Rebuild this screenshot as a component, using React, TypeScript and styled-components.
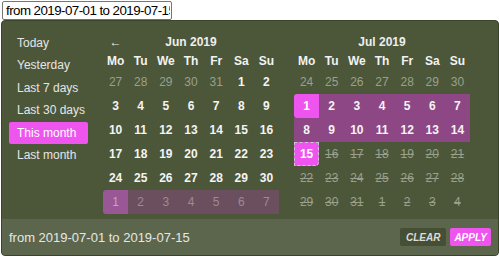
import React from "react";
import styled, { createGlobalStyle, css } from "styled-components";

const Global = createGlobalStyle`
  body {
    margin: 0;
    background: #ffffff;
  }
`;

const Page = styled.div`
  padding: 1px 0 0 1px;
  font-family: "Liberation Sans", Arial, sans-serif;
`;

const DateInput = styled.input`
  display: block;
  box-sizing: border-box;
  width: 170px;
  height: 19px;
  margin: 0 0 0 1px;
  padding: 0 1px 0 3px;
  border: 1px solid #767676;
  border-radius: 2px;
  font-family: "Liberation Sans", Arial, sans-serif;
  font-size: 13.33px;
  letter-spacing: -0.55px;
  color: #000;
  outline: none;
`;

const Panel = styled.div`
  box-sizing: border-box;
  width: 498px;
  height: 236px;
  display: flex;
  flex-direction: column;
  background: #4c573a;
  border: 1px solid #3a4429;
  border-radius: 4px;
  color: #eeeeee;
  overflow: hidden;
`;

const Body = styled.div`
  display: flex;
  padding: 11px 0 5px 7px;
  gap: 15px;
`;

const Ranges = styled.ul`
  list-style: none;
  margin: 0;
  padding: 0;
  width: 79px;
  display: flex;
  flex-direction: column;
  gap: 0.4px;
`;

const RangeItem = styled.li<{ $active?: boolean }>`
  height: 22px;
  line-height: 22px;
  padding-left: 8px;
  border-radius: 2px;
  font-size: 12px;
  color: #e6e6e6;
  white-space: nowrap;
  ${(p) =>
    p.$active &&
    css`
      background: #ee55ee;
      color: #ffffff;
    `}
`;

const Month = styled.div`
  width: 176px;
  display: grid;
  grid-template-columns: repeat(7, 1fr);
  grid-template-rows: 20px 18px repeat(6, 24px);
`;

const Title = styled.div`
  grid-column: 2 / 7;
  text-align: center;
  font-size: 12px;
  font-weight: bold;
  line-height: 20px;
  color: #eeeeee;
`;

const Arrow = styled.div`
  text-align: center;
  font-size: 12px;
  font-weight: bold;
  line-height: 20px;
  color: #eeeeee;
`;

const WeekDay = styled.div`
  text-align: center;
  font-size: 12px;
  font-weight: bold;
  line-height: 18px;
  color: #f2f2f2;
`;

type Tone = "normal" | "muted" | "disabled";
type Mark = "none" | "in" | "start" | "end" | "ghost" | "ghostStart";

const Day = styled.div<{ $tone: Tone; $mark: Mark }>`
  box-sizing: border-box;
  text-align: center;
  font-size: 12px;
  line-height: 24px;
  font-weight: bold;
  color: #f4f4f4;
  ${(p) =>
    p.$tone === "muted" &&
    css`
      font-weight: normal;
      color: #9aa08c;
    `}
  ${(p) =>
    p.$tone === "disabled" &&
    css`
      font-weight: normal;
      color: #9aa08c;
      text-decoration: line-through;
    `}
  ${(p) =>
    p.$mark === "in" &&
    css`
      background: #8e4785;
    `}
  ${(p) =>
    p.$mark === "start" &&
    css`
      background: #ee55ee;
      color: #ffffff;
      border-radius: 3px 0 0 3px;
    `}
  ${(p) =>
    p.$mark === "end" &&
    css`
      background: #ee55ee;
      color: #ffffff;
      border: 1px dashed #c9c9c9;
      line-height: 22px;
      border-radius: 0 0 4px 0;
    `}
  ${(p) =>
    p.$mark === "ghost" &&
    css`
      background: #6b4f5f;
      color: #9c8a94;
      font-weight: normal;
    `}
  ${(p) =>
    p.$mark === "ghostStart" &&
    css`
      background: #9a5796;
      color: #c3a5c0;
      font-weight: normal;
      border-radius: 3px 0 0 3px;
    `}
`;

const Footer = styled.div`
  flex: 1;
  display: flex;
  align-items: center;
  padding: 0 7px 0 7px;
  background: #5c664c;
`;

const FooterText = styled.span`
  flex: 1;
  font-size: 13px;
  color: #e6e6e6;
`;

const Button = styled.button<{ $primary?: boolean }>`
  height: 18px;
  margin-left: 4px;
  padding: 0 ${(p) => (p.$primary ? "4px" : "6px")};
  border: none;
  border-radius: 2px;
  font-family: "Liberation Sans", Arial, sans-serif;
  font-size: 10px;
  font-weight: bold;
  font-style: italic;
  background: ${(p) => (p.$primary ? "#ee55ee" : "#454f35")};
  color: ${(p) => (p.$primary ? "#ffffff" : "#dcdcdc")};
`;

type Cell = { n: number; tone: Tone; mark: Mark };

const weekDays = ["Mo", "Tu", "We", "Th", "Fr", "Sa", "Su"];

const june: Cell[] = [
  ...[27, 28, 29, 30, 31].map((n) => ({ n, tone: "muted" as Tone, mark: "none" as Mark })),
  ...Array.from({ length: 30 }, (_, i) => ({ n: i + 1, tone: "normal" as Tone, mark: "none" as Mark })),
  ...[1, 2, 3, 4, 5, 6, 7].map((n) => ({
    n,
    tone: "muted" as Tone,
    mark: (n === 1 ? "ghostStart" : "ghost") as Mark,
  })),
];

const july: Cell[] = [
  ...[24, 25, 26, 27, 28, 29, 30].map((n) => ({ n, tone: "muted" as Tone, mark: "none" as Mark })),
  ...Array.from({ length: 31 }, (_, i) => {
    const n = i + 1;
    let mark: Mark = "none";
    if (n === 1) mark = "start";
    else if (n === 15) mark = "end";
    else if (n < 15) mark = "in";
    return { n, tone: (n > 15 ? "disabled" : "normal") as Tone, mark };
  }),
  ...[1, 2, 3, 4].map((n) => ({ n, tone: "disabled" as Tone, mark: "none" as Mark })),
];

const ranges = ["Today", "Yesterday", "Last 7 days", "Last 30 days", "This month", "Last month"];

const Calendar = ({ title, days, arrow }: { title: string; days: Cell[]; arrow?: boolean }) => (
  <Month>
    {arrow ? <Arrow>←</Arrow> : <div />}
    <Title>{title}</Title>
    <div />
    {weekDays.map((d) => (
      <WeekDay key={d}>{d}</WeekDay>
    ))}
    {days.map((d, i) => (
      <Day key={i} $tone={d.tone} $mark={d.mark}>
        {d.n}
      </Day>
    ))}
  </Month>
);

const App = () => {
  return (
    <Page>
      <Global />
      <DateInput defaultValue="from 2019-07-01 to 2019-07-15" />
      <Panel>
        <Body>
          <Ranges>
            {ranges.map((r) => (
              <RangeItem key={r} $active={r === "This month"}>
                {r}
              </RangeItem>
            ))}
          </Ranges>
          <Calendar title="Jun 2019" days={june} arrow />
          <Calendar title="Jul 2019" days={july} />
        </Body>
        <Footer>
          <FooterText>from 2019-07-01 to 2019-07-15</FooterText>
          <Button>CLEAR</Button>
          <Button $primary>APPLY</Button>
        </Footer>
      </Panel>
    </Page>
  );
};

export default App;
